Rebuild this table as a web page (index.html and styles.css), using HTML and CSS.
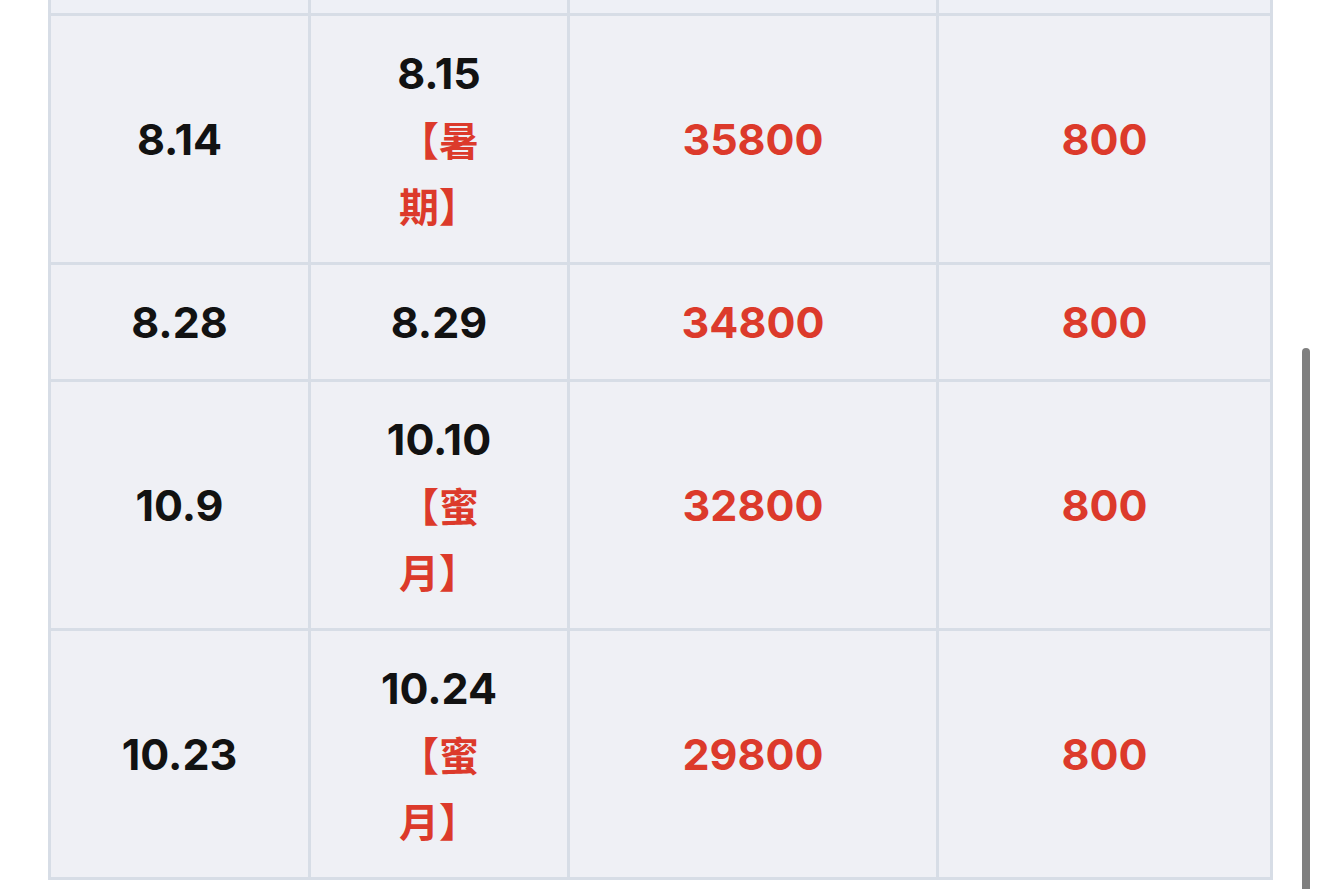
FILE: index.html
```html
<!DOCTYPE html>
<html lang="zh">
<head>
<meta charset="utf-8">
<title>价格表</title>
<link rel="stylesheet" href="styles.css">
</head>
<body>
<div class="page">
  <table class="price">
    <colgroup>
      <col class="c1"><col class="c2"><col class="c3"><col class="c4">
    </colgroup>
    <tbody>
      <tr class="partial"><td></td><td></td><td></td><td></td></tr>
      <tr>
        <td><div class="num">8.14</div></td>
        <td><div class="num">8.15</div><div class="tag">【暑<br>期】</div></td>
        <td class="red"><div class="num">35800</div></td>
        <td class="red"><div class="num">800</div></td>
      </tr>
      <tr>
        <td><div class="num">8.28</div></td>
        <td><div class="num">8.29</div></td>
        <td class="red"><div class="num">34800</div></td>
        <td class="red"><div class="num">800</div></td>
      </tr>
      <tr>
        <td><div class="num">10.9</div></td>
        <td><div class="num">10.10</div><div class="tag">【蜜<br>月】</div></td>
        <td class="red"><div class="num">32800</div></td>
        <td class="red"><div class="num">800</div></td>
      </tr>
      <tr>
        <td><div class="num">10.23</div></td>
        <td><div class="num">10.24</div><div class="tag">【蜜<br>月】</div></td>
        <td class="red"><div class="num">29800</div></td>
        <td class="red"><div class="num">800</div></td>
      </tr>
    </tbody>
  </table>
</div>
<div class="scrollbar"></div>
</body>
</html>
```
FILE: styles.css
```css
html, body {
  margin: 0;
  padding: 0;
  background: #ffffff;
}

.page {
  padding-left: 48px;
}

.price {
  border-collapse: collapse;
  table-layout: fixed;
  width: 1225px;
  background: #eff0f5;
  color: #121212;
}

.price col.c1 { width: 260px; }
.price col.c2 { width: 259px; }
.price col.c3 { width: 369px; }
.price col.c4 { width: 334px; }

.price td {
  border: 3px solid #d7dde6;
  padding: 24px 0;
  text-align: center;
  vertical-align: middle;
}

.price tr.partial td {
  border-top: 0;
  padding: 0;
  height: 13px;
  background: #eef0f6;
}

.num {
  font-family: Inter, "Liberation Sans", sans-serif;
  font-weight: 700;
  font-size: 43px;
  line-height: 66px;
  height: 66px;
}

.tag {
  color: #dc3a2b;
  font-family: "Noto Sans CJK SC", sans-serif;
  font-weight: 700;
  font-size: 40px;
  line-height: 66px;
}

.red {
  color: #dc3a2b;
}

.scrollbar {
  position: fixed;
  right: 10px;
  top: 348px;
  bottom: -6px;
  width: 8px;
  border-radius: 4px;
  background: #7f7f7f;
}
```
